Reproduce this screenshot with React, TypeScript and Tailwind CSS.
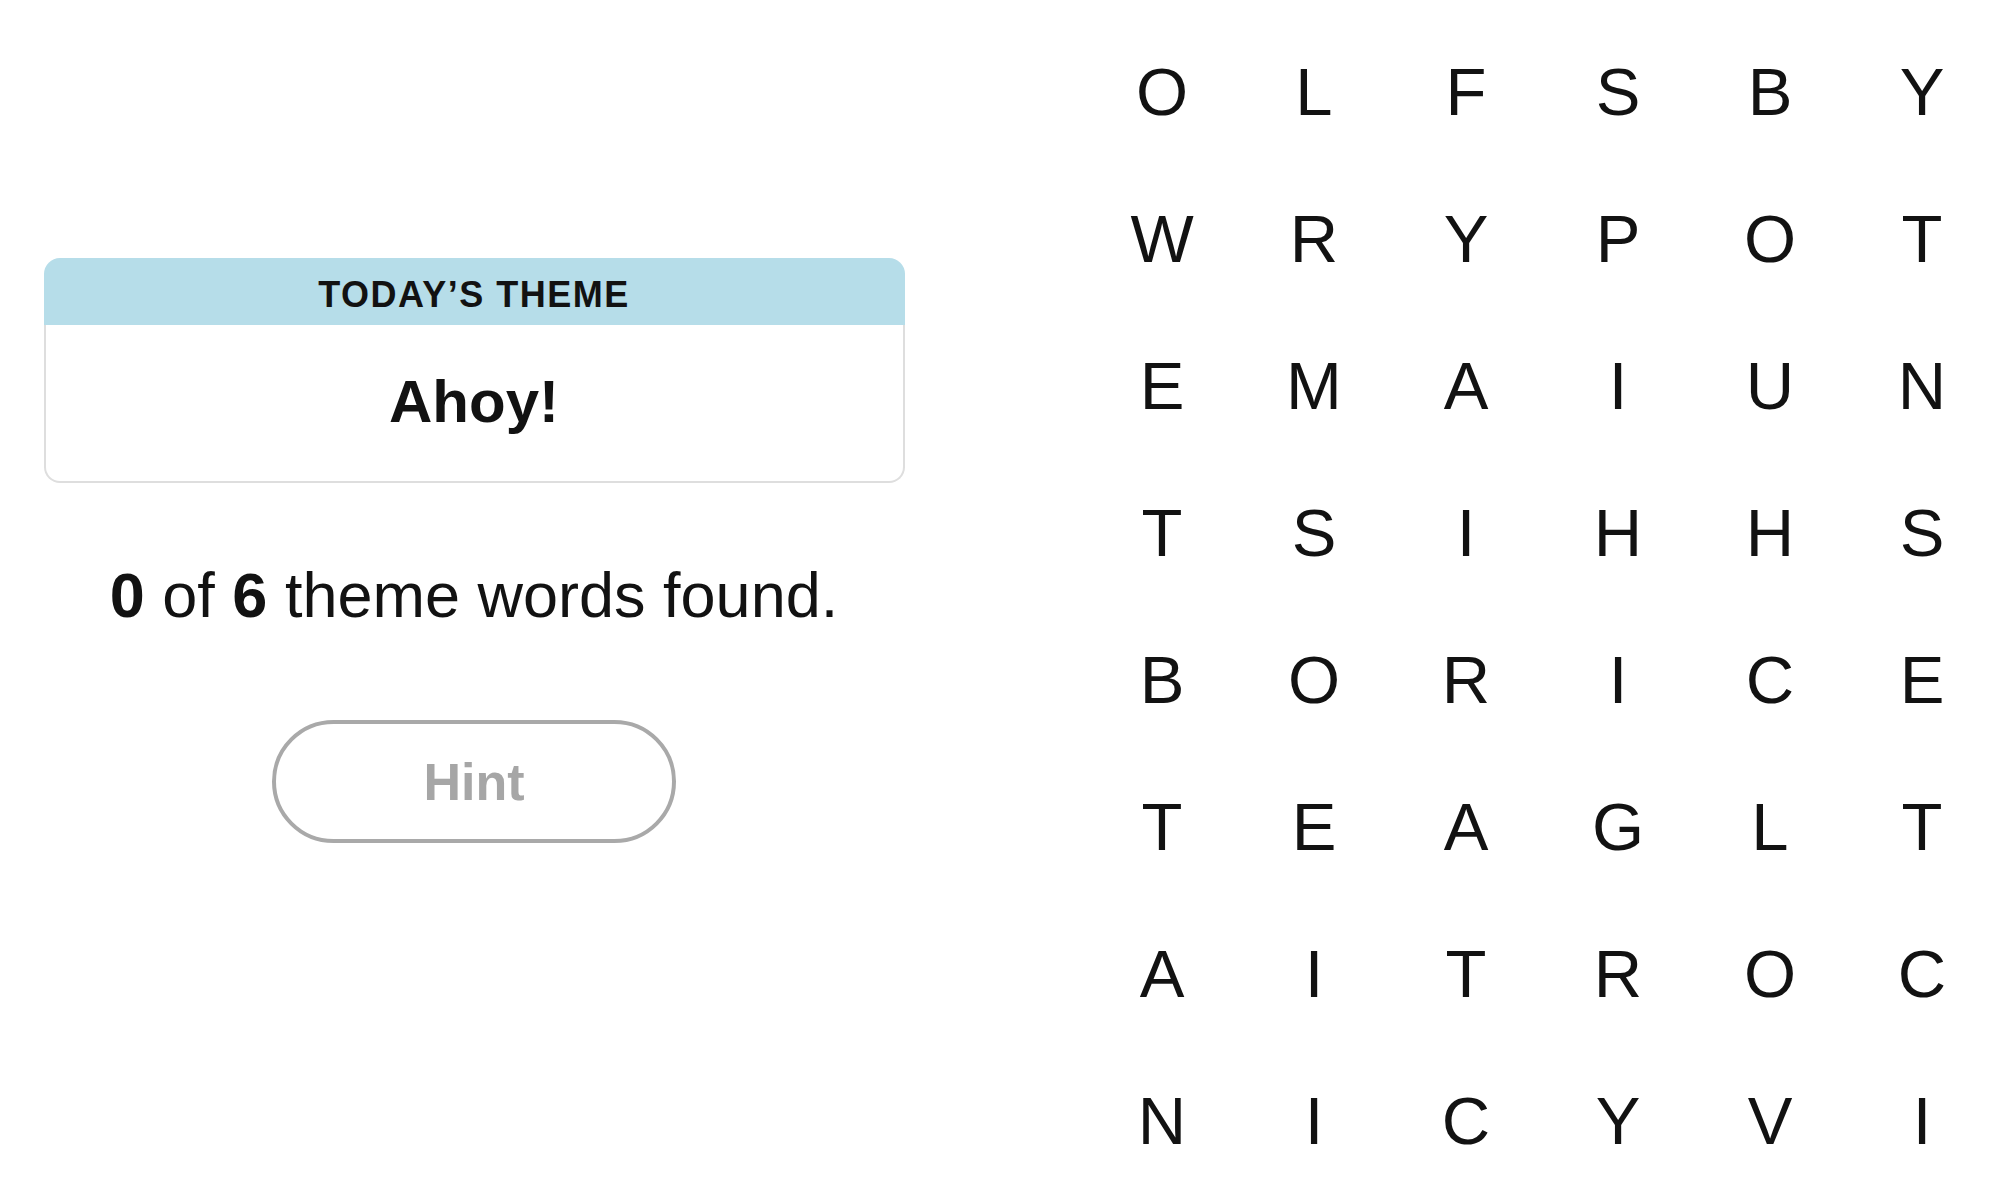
const letters = [
  "OLFSBY",
  "WRYPOT",
  "EMAIUN",
  "TSIHHS",
  "BORICE",
  "TEAGLT",
  "AITROC",
  "NICYVI",
];

function ThemeCard() {
  return (
    <div className="w-[861px]">
      <div className="h-[67px] rounded-t-[16px] bg-[#b6dde9] pt-[19px] text-center">
        <h2 className="text-[36px] leading-none font-bold tracking-[1.5px] text-[#121212]">
          TODAY’S THEME
        </h2>
      </div>
      <div className="rounded-b-[16px] border-x-2 border-b-2 border-[#dedede] bg-white pt-[47px] pb-[49px] text-center">
        <h1 className="text-[60px] leading-none font-bold text-[#121212]">Ahoy!</h1>
      </div>
    </div>
  );
}

function LetterGrid() {
  return (
    <div className="grid w-[912px] grid-cols-6 pt-[18px]">
      {letters.map((row, r) =>
        row.split("").map((ch, c) => (
          <div
            key={`${r}-${c}`}
            className="flex h-[147px] items-center justify-center text-[67px] leading-none text-[#121212]"
          >
            {ch}
          </div>
        ))
      )}
    </div>
  );
}

export default function App() {
  return (
    <div className="flex min-h-screen w-full bg-white font-['Liberation_Sans',Arial,sans-serif]">
      <div className="flex w-[948px] flex-col items-center pt-[258px]">
        <ThemeCard />
        <p className="mt-[81px] text-[63px] leading-none text-[#121212]">
          <span className="font-bold">0</span> of <span className="font-bold">6</span> theme words found.
        </p>
        <button className="mt-[93px] h-[123px] w-[404px] rounded-full border-4 border-[#a9a9a9] bg-white text-[52px] leading-none font-bold text-[#a6a6a6]">
          Hint
        </button>
      </div>
      <div className="pl-[138px]">
        <LetterGrid />
      </div>
    </div>
  );
}
